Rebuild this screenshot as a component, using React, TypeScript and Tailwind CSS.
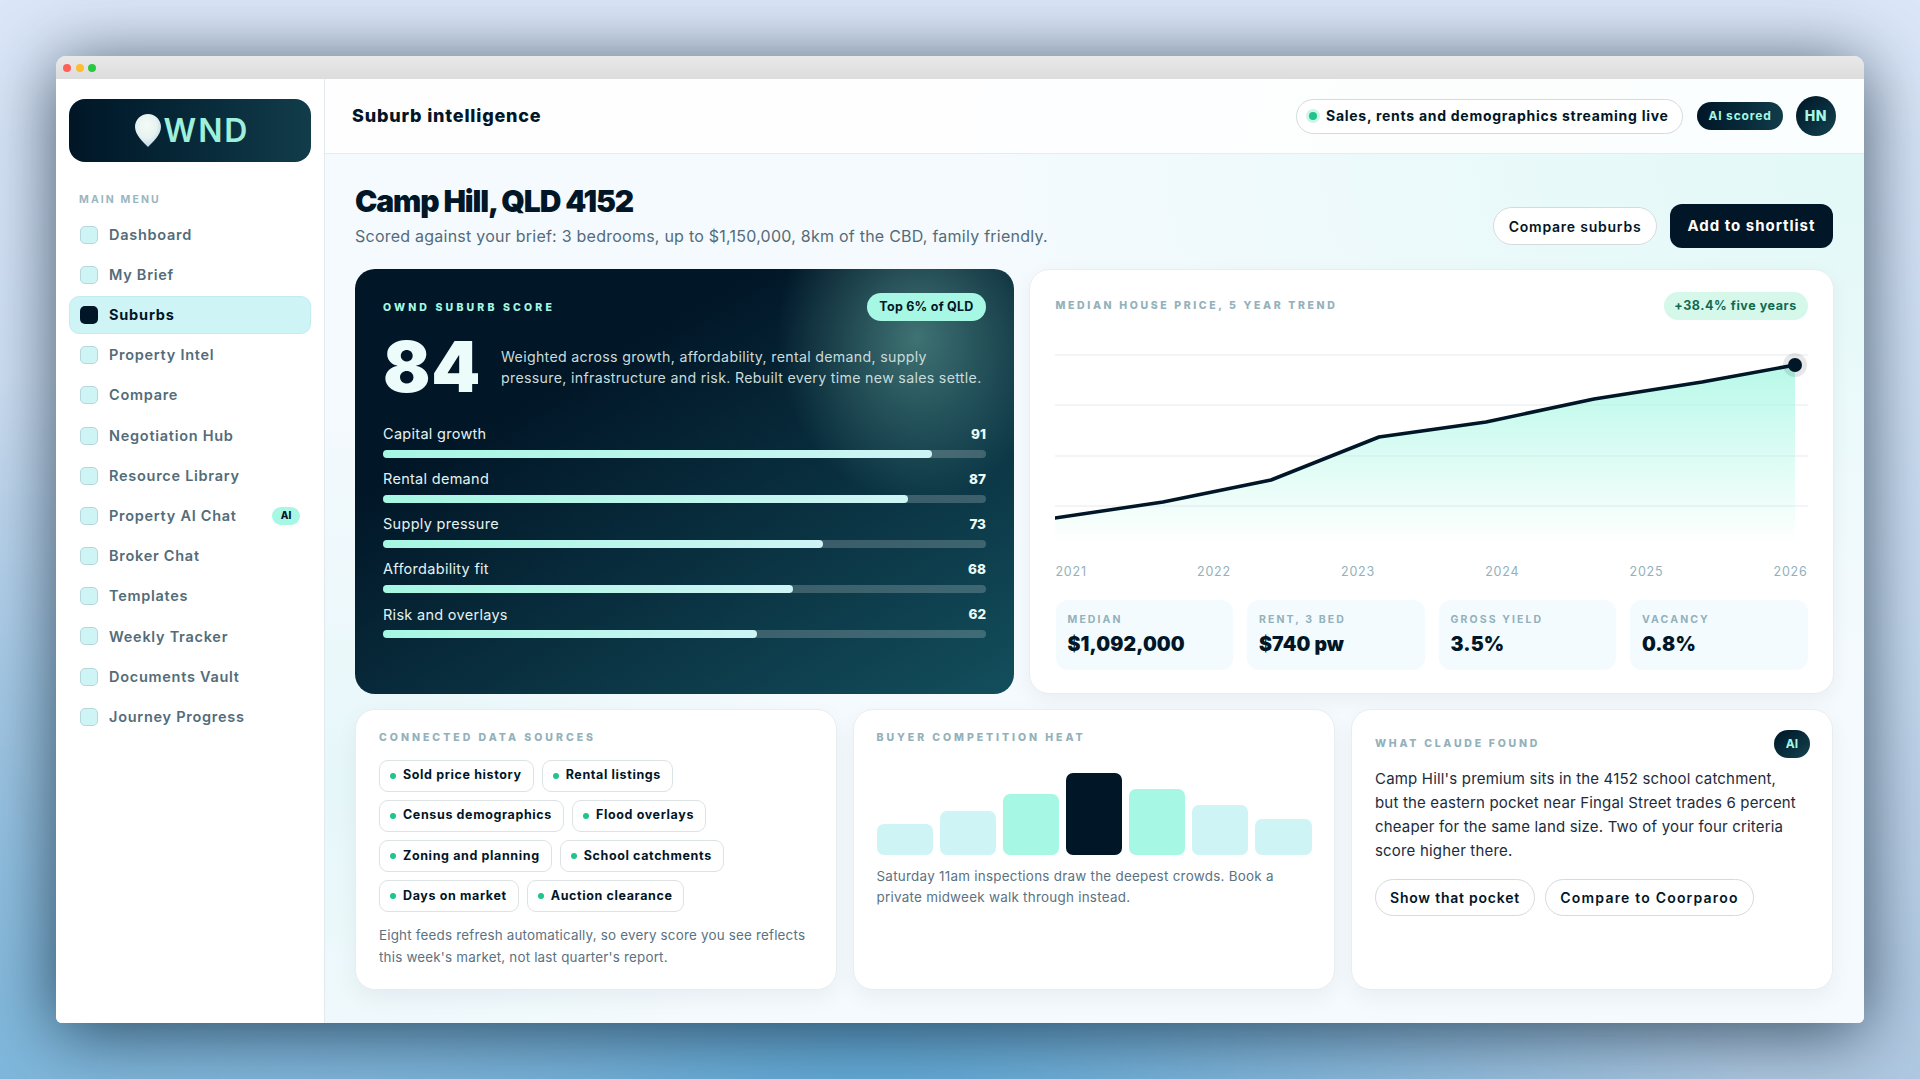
const menu = ["Dashboard","My Brief","Suburbs","Property Intel","Compare","Negotiation Hub","Resource Library","Property AI Chat","Broker Chat","Templates","Weekly Tracker","Documents Vault","Journey Progress"];
const scores: [string, number][] = [["Capital growth",91],["Rental demand",87],["Supply pressure",73],["Affordability fit",68],["Risk and overlays",62]];
const stats = [["MEDIAN","$1,092,000"],["RENT, 3 BED","$740 pw"],["GROSS YIELD","3.5%"],["VACANCY","0.8%"]];
const years = ["2021","2022","2023","2024","2025","2026"];
const chips = [["Sold price history","Rental listings"],["Census demographics","Flood overlays"],["Zoning and planning","School catchments"],["Days on market","Auction clearance"]];
const heat: [number, string][] = [[31,"bg-[#cef4f5]"],[44,"bg-[#cef4f5]"],[61,"bg-[#a6f7e3]"],[82,"bg-[#011627]"],[66,"bg-[#a6f7e3]"],[50,"bg-[#cef4f5]"],[36,"bg-[#cef4f5]"]];

function Pin() {
  return (
    <svg width="26" height="33" viewBox="0 0 26 33" className="shrink-0">
      <defs>
        <radialGradient id="pin" cx="45%" cy="35%" r="70%">
          <stop offset="0%" stopColor="#f6fbf6" />
          <stop offset="55%" stopColor="#e6f3f1" />
          <stop offset="100%" stopColor="#b9cfe6" />
        </radialGradient>
      </defs>
      <path d="M13 0C5.8 0 0 5.8 0 13c0 8 9 16 13 20 4-4 13-12 13-20C26 5.8 20.2 0 13 0Z" fill="url(#pin)" />
    </svg>
  );
}

function Chart() {
  const pts = "0,173 108,157 216,135 324,92 431,77 539,54 647,37 740,20";
  return (
    <svg width="753" height="210" viewBox="0 0 753 210" className="block -ml-[1px]">
      <defs>
        <linearGradient id="area" x1="0" y1="0" x2="0" y2="1">
          <stop offset="0%" stopColor="#a6f7e3" stopOpacity="0.8" />
          <stop offset="100%" stopColor="#a6f7e3" stopOpacity="0" />
        </linearGradient>
      </defs>
      {[10,60,111,161].map((y) => <line key={y} x1="0" x2="753" y1={y} y2={y} stroke="#eef1f2" strokeWidth="1.5" />)}
      <polygon points={`${pts} 740,200 0,200`} fill="url(#area)" />
      <polyline points={pts} fill="none" stroke="#011627" strokeWidth="3.5" strokeLinejoin="round" strokeLinecap="round" />
      <circle cx="740" cy="20" r="12" fill="#011627" fillOpacity="0.1" />
      <circle cx="740" cy="20" r="7" fill="#011627" />
    </svg>
  );
}

export default function App() {
  return (
    <div className="h-[1079px] w-full overflow-hidden pt-[56px] px-[56px] [font-family:Inter,sans-serif] bg-[radial-gradient(ellipse_900px_500px_at_45%_105%,#5aa7d6_0%,rgba(90,167,214,0)_100%),radial-gradient(ellipse_600px_700px_at_0%_100%,#7fb8dc_0%,rgba(127,184,220,0)_100%),linear-gradient(180deg,#dbe7f9_0%,#c6daf0_60%,#afc9e2_100%)]">
      <div className="flex h-[967px] flex-col overflow-hidden rounded-t-[10px] rounded-b-[6px] bg-white shadow-[0_8px_70px_rgba(1,22,39,0.7)]">
        <div className="flex h-[23px] shrink-0 items-center gap-[4.5px] bg-gradient-to-b from-[#e9e9e9] to-[#dcdcdc] pl-[7px]">
          <span className="size-[8px] rounded-full bg-[#ff5f57]" />
          <span className="size-[8px] rounded-full bg-[#febc2e]" />
          <span className="size-[8px] rounded-full bg-[#28c840]" />
        </div>
        <div className="flex min-h-0 flex-1">
          <aside className="w-[269px] shrink-0 border-r border-[#e3eaee] bg-white px-[13px] pt-[20px]">
            <div className="flex h-[63px] items-center justify-center gap-[3px] rounded-[16px] bg-gradient-to-r from-[#011627] to-[#123c4a] pl-[4px]">
              <Pin />
              <span className="text-[32px] font-semibold leading-none tracking-[0.06em] text-[#9eefdc]">WND</span>
            </div>
            <div className="mt-[30px] pl-[10px] text-[10.5px] font-bold leading-[16px] tracking-[0.2em] text-[#9ab6bf]">MAIN MENU</div>
            <nav className="mt-[7.5px] flex flex-col gap-[2px]">
              {menu.map((m) => {
                const active = m === "Suburbs";
                return (
                  <div key={m} className={active ? "flex h-[38.2px] items-center rounded-[10px] border border-[#c3ecef] bg-[#cef4f5] pl-[10px]" : "flex h-[38.2px] items-center rounded-[10px] border border-transparent pl-[10px]"}>
                    <span className={active ? "size-[18px] shrink-0 rounded-[5px] bg-[#011627]" : "size-[18px] shrink-0 rounded-[5px] border-[1.5px] border-[#b5d8dd] bg-[#cef4f5]"} />
                    <span className={active ? "ml-[11px] text-[14.5px] font-bold tracking-[0.055em] text-[#011627]" : "ml-[11px] text-[14.5px] font-semibold tracking-[0.05em] text-[#536c7a]"}>{m}</span>
                    {m === "Property AI Chat" && <span className="ml-auto mr-[10px] flex h-[18px] w-[28px] items-center justify-center rounded-full bg-[#a6f7e3] text-[10px] font-extrabold text-[#011627]">AI</span>}
                  </div>
                );
              })}
            </nav>
          </aside>
          <main className="flex min-w-0 flex-1 flex-col bg-[radial-gradient(ellipse_900px_500px_at_100%_10%,#e2f9f7_0%,rgba(226,249,247,0)_100%),radial-gradient(ellipse_500px_400px_at_0%_75%,#e6f7f9_0%,rgba(230,247,249,0)_100%),linear-gradient(#f5fafe,#f5fafe)]">
            <header className="flex h-[75px] shrink-0 items-center justify-between border-b border-[#e6ebee] bg-white/85 pl-[27px] pr-[28px]">
              <h2 className="-mt-[1px] text-[18px] font-extrabold tracking-[0.045em] text-[#011627]">Suburb intelligence</h2>
              <div className="flex items-center">
                <div className="flex h-[35px] w-[387px] items-center rounded-full border border-[#d5dadd] bg-white pl-[12px]">
                  <span className="size-[8px] rounded-full bg-[#1fc48d] shadow-[0_0_0_3px_#cdf5e8]" />
                  <span className="ml-[9px] -mt-[1px] text-[14px] font-bold tracking-[0.052em] text-[#011627]">Sales, rents and demographics streaming live</span>
                </div>
                <span className="ml-[14px] flex h-[28px] w-[86px] items-center justify-center rounded-full bg-gradient-to-r from-[#011627] to-[#123c4a] text-[12px] font-bold tracking-[0.07em] text-[#a6f7e3]">AI scored</span>
                <span className="ml-[13px] flex size-[40px] items-center justify-center rounded-full bg-gradient-to-br from-[#011627] to-[#16434f] pb-[1px] text-[14px] font-extrabold tracking-[0.05em] text-[#a6f7e3]">HN</span>
              </div>
            </header>
            <div className="flex min-h-0 flex-1 flex-col pl-[30px] pr-[31px] pt-[29px]">
              <div className="flex h-[65px] shrink-0 items-end justify-between">
                <div>
                  <h1 className="text-[30px] font-black leading-[36px] tracking-[-0.037em] text-[#011627]">Camp Hill, QLD 4152</h1>
                  <p className="mt-[5px] text-[16px] leading-[24px] tracking-[0.015em] text-[#536c7a]">Scored against your brief: 3 bedrooms, up to $1,150,000, 8km of the CBD, family friendly.</p>
                </div>
                <div className="flex items-center gap-[13px]">
                  <button className="flex h-[38px] w-[164px] items-center justify-center rounded-full border border-[#d5dadd] bg-white text-[14px] font-semibold tracking-[0.055em] text-[#011627]">Compare suburbs</button>
                  <button className="flex h-[44px] w-[163px] items-center justify-center rounded-[12px] bg-[#011627] text-[15px] font-bold tracking-[0.065em] text-white">Add to shortlist</button>
                </div>
              </div>
              <div className="mt-[20.5px] grid h-[425px] shrink-0 grid-cols-[659px_1fr] gap-[15px]">
                <section className="flex flex-col rounded-[20px] px-[28px] pt-[25px] text-white bg-[radial-gradient(ellipse_140px_165px_at_562px_68px,rgba(104,170,160,0.58)_0%,rgba(104,170,160,0)_100%),linear-gradient(150deg,#011627_28%,#134e5c_100%)]">
                  <div className="flex h-[28px] items-center justify-between">
                    <span className="text-[10.5px] font-extrabold tracking-[0.3em] text-[#a6f7e3]">OWND SUBURB SCORE</span>
                    <span className="-mt-[1px] flex h-[28px] w-[119px] items-center justify-center rounded-full bg-[#a6f7e3] text-[12.5px] font-bold tracking-[0.02em] text-[#011627]">Top 6% of QLD</span>
                  </div>
                  <div className="mt-[7px] flex h-[76px] items-center">
                    <span className="w-[118px] shrink-0 text-[70px] font-black leading-none tracking-[0.01em] text-[#ebfcfb]">84</span>
                    <p className="mt-[1px] text-[14.2px] leading-[21.5px] tracking-[0.022em] text-[#c9dcdc] whitespace-nowrap">Weighted across growth, affordability, rental demand, supply<br />pressure, infrastructure and risk. Rebuilt every time new sales settle.</p>
                  </div>
                  <div className="mt-[15.5px] flex flex-col gap-[7.1px]">
                    {scores.map(([n, v]) => (
                      <div key={n}>
                        <div className="flex h-[28px] items-center justify-between">
                          <span className="text-[14.5px] tracking-[0.02em] text-[#e4f2f1]">{n}</span>
                          <span className="text-[13.5px] font-extrabold text-[#e8fbf8]">{v}</span>
                        </div>
                        <div className="mt-[2px] h-[8px] rounded-full bg-white/20">
                          <div className="h-full rounded-full bg-gradient-to-r from-[#a6f7e3] to-[#cef4f5]" style={{ width: `${v}%` }} />
                        </div>
                      </div>
                    ))}
                  </div>
                </section>
                <section className="flex flex-col rounded-[20px] border border-[#e8eef0] bg-white px-[25.5px] pt-[22.5px] shadow-[0_6px_20px_rgba(1,22,39,0.05)]">
                  <div className="flex h-[28px] items-center justify-between">
                    <span className="text-[10.5px] font-extrabold tracking-[0.25em] text-[#93b1bb]">MEDIAN HOUSE PRICE, 5 YEAR TREND</span>
                    <span className="flex h-[28px] w-[144px] items-center justify-center rounded-full bg-[#d5f8ea] text-[12.5px] font-bold tracking-[0.045em] text-[#0f6a4f]">+38.4% five years</span>
                  </div>
                  <div className="mt-[24.5px]"><Chart /></div>
                  <div className="mt-[7px] flex justify-between text-[12.5px] leading-[20px] tracking-[0.06em] text-[#93b1bb]">
                    {years.map((y) => <span key={y}>{y}</span>)}
                  </div>
                  <div className="mt-[18px] grid grid-cols-4 gap-[14px]">
                    {stats.map(([l, v]) => (
                      <div key={l} className="h-[70px] rounded-[12px] bg-[#f4fbfe] pl-[12px] pt-[12px]">
                        <div className="text-[10.5px] font-bold leading-[16px] tracking-[0.2em] text-[#93b1bb]">{l}</div>
                        <div className="mt-[3px] text-[19.5px] font-black leading-[26px] tracking-[0.005em] text-[#011627]">{v}</div>
                      </div>
                    ))}
                  </div>
                </section>
              </div>
              <div className="mt-[15.5px] grid h-[281px] shrink-0 grid-cols-3 gap-[16px]">
                <section className="rounded-[20px] border border-[#e8eef0] bg-white pl-[23px] pr-[20px] pt-[19.5px] shadow-[0_8px_22px_rgba(1,22,39,0.05)]">
                  <div className="text-[10.5px] font-extrabold leading-[16px] tracking-[0.285em] text-[#93b1bb]">CONNECTED DATA SOURCES</div>
                  <div className="mt-[14px] flex flex-col gap-[8.3px]">
                    {chips.map((row) => (
                      <div key={row[0]} className="flex gap-[8px]">
                        {row.map((c) => (
                          <span key={c} className="flex h-[32px] items-center whitespace-nowrap rounded-[9px] border border-[#dde2e5] bg-white pl-[10px] pr-[11px] text-[12.5px] font-bold tracking-[0.05em] text-[#011627]">
                            <span className="mr-[7px] size-[6px] rounded-full bg-[#1fc48d]" />{c}
                          </span>
                        ))}
                      </div>
                    ))}
                  </div>
                  <p className="mt-[13px] text-[13.4px] leading-[21.3px] tracking-[0.015em] text-[#5b7282] whitespace-nowrap">Eight feeds refresh automatically, so every score you see reflects<br />this week's market, not last quarter's report.</p>
                </section>
                <section className="rounded-[20px] border border-[#e8eef0] bg-white px-[22.5px] pt-[19.5px] shadow-[0_8px_22px_rgba(1,22,39,0.05)]">
                  <div className="text-[10.5px] font-extrabold leading-[16px] tracking-[0.28em] text-[#93b1bb]">BUYER COMPETITION HEAT</div>
                  <div className="mt-[27px] flex h-[82px] items-end gap-[6.5px]">
                    {heat.map(([h, c], i) => <div key={i} className={`flex-1 rounded-[7px] ${c}`} style={{ height: h }} />)}
                  </div>
                  <p className="mt-[11px] text-[13.4px] leading-[21.3px] tracking-[0.02em] text-[#5b7282] whitespace-nowrap">Saturday 11am inspections draw the deepest crowds. Book a<br />private midweek walk through instead.</p>
                </section>
                <section className="rounded-[20px] border border-[#e8eef0] bg-white pl-[23px] pr-[22px] pt-[20px] shadow-[0_8px_22px_rgba(1,22,39,0.05)]">
                  <div className="flex h-[28px] items-center justify-between">
                    <span className="text-[10.5px] font-extrabold tracking-[0.26em] text-[#93b1bb]">WHAT CLAUDE FOUND</span>
                    <span className="flex h-[28px] w-[36px] items-center justify-center rounded-full bg-gradient-to-br from-[#011627] to-[#16434f] text-[12px] font-bold text-[#a6f7e3]">AI</span>
                  </div>
                  <p className="mt-[9px] text-[15px] leading-[24px] tracking-[0.012em] text-[#1b2c3c] whitespace-nowrap">Camp Hill's premium sits in the 4152 school catchment,<br />but the eastern pocket near Fingal Street trades 6 percent<br />cheaper for the same land size. Two of your four criteria<br />score higher there.</p>
                  <div className="mt-[16px] flex gap-[10px]">
                    <button className="flex h-[37px] w-[160px] items-center justify-center rounded-full border border-[#d5dadd] bg-white text-[14px] font-semibold tracking-[0.055em] text-[#011627]">Show that pocket</button>
                    <button className="flex h-[37px] w-[209px] items-center justify-center rounded-full border border-[#d5dadd] bg-white text-[14px] font-semibold tracking-[0.085em] text-[#011627]">Compare to Coorparoo</button>
                  </div>
                </section>
              </div>
            </div>
          </main>
        </div>
      </div>
    </div>
  );
}
